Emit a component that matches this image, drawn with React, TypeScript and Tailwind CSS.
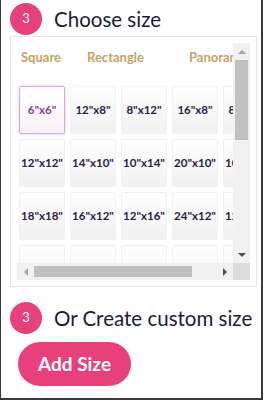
const rows = [
  ['6"x6"', '12"x8"', '8"x12"', '16"x8"', '8"x16"'],
  ['12"x12"', '14"x10"', '10"x14"', '20"x10"', '10"x20"'],
  ['18"x18"', '16"x12"', '12"x16"', '24"x12"', '12"x24"'],
  ['', '', '', '', ''],
];

function StepBadge() {
  return (
    <div className="w-[32px] h-[32px] rounded-full bg-[#e8407b] flex items-center justify-center text-white text-[13px] shrink-0">
      3
    </div>
  );
}

function Arrow({ dir, dark }: { dir: 'up' | 'down' | 'left' | 'right'; dark?: boolean }) {
  const c = dark ? 'border-[#505050]' : 'border-[#a3a3a3]';
  if (dir === 'up') return <div className={`w-0 h-0 border-x-[4px] border-x-transparent border-b-[4px] ${c}`} />;
  if (dir === 'down') return <div className={`w-0 h-0 border-x-[4px] border-x-transparent border-t-[4px] ${c}`} />;
  if (dir === 'left') return <div className={`w-0 h-0 border-y-[4px] border-y-transparent border-r-[4px] ${c}`} />;
  return <div className={`w-0 h-0 border-y-[4px] border-y-transparent border-l-[4px] ${c}`} />;
}

export default function App() {
  return (
    <div className="w-[264px] h-[401px] bg-white" style={{ fontFamily: 'Lato, "Open Sans", sans-serif' }}>
      <div className="w-[263px] h-[400px] border-l border-r-2 border-b-2 border-[#3a3a3a] pl-[9px] pt-[3px]">
        <div className="flex items-center gap-[12px]">
          <StepBadge />
          <div className="text-[20.5px] text-[#1d1846] leading-none">Choose size</div>
        </div>

        <div className="mt-[1px] w-[247px] h-[251px] border border-[#e6e6e6] p-[6px]">
          <div className="flex">
            <div className="w-[217px] h-[220px] overflow-hidden pl-[2px]">
              <div className="flex pt-[7px] pl-[2px] text-[13px] leading-[14px] font-bold text-[#c9a265] whitespace-nowrap">
                <div className="w-[66px] shrink-0">Square</div>
                <div className="w-[102px] shrink-0">Rectangle</div>
                <div className="shrink-0">Panorama</div>
              </div>
              <div className="mt-[22px] grid grid-cols-[repeat(5,46px)] gap-x-[5px] gap-y-[5px] w-[260px]">
                {rows.flat().map((s, i) => (
                  <div
                    key={i}
                    className={
                      i === 0
                        ? 'h-[48px] rounded-[2px] border border-[#d6a9e6] shadow-[0_0_3px_#e2bdf0] bg-gradient-to-b from-white to-[#f7f2f9] flex items-center justify-center text-[11.5px] font-bold text-[#8a3a9c]'
                        : 'h-[48px] rounded-[2px] border border-[#f2f2f2] bg-gradient-to-b from-white to-[#f1f1f1] flex items-center justify-center text-[11.5px] font-bold text-[#291c4c] whitespace-nowrap'
                    }
                  >
                    {s}
                  </div>
                ))}
              </div>
            </div>
            <div className="w-[17px] h-[220px] bg-[#f1f1f1] flex flex-col items-center">
              <div className="h-[17px] flex items-center justify-center"><Arrow dir="up" /></div>
              <div className="w-[13px] h-[80px] bg-[#c1c1c1]" />
              <div className="flex-1" />
              <div className="h-[17px] flex items-center justify-center"><Arrow dir="down" dark /></div>
            </div>
          </div>
          <div className="flex">
            <div className="w-[217px] h-[17px] bg-[#f1f1f1] flex items-center">
              <div className="w-[17px] flex justify-center"><Arrow dir="left" /></div>
              <div className="w-[158px] h-[11px] bg-[#c1c1c1]" />
              <div className="flex-1" />
              <div className="w-[17px] flex justify-center"><Arrow dir="right" dark /></div>
            </div>
            <div className="w-[17px] h-[17px] bg-[#dcdcdc]" />
          </div>
        </div>

        <div className="mt-[15px] flex items-center gap-[12px]">
          <StepBadge />
          <div className="text-[20.5px] text-[#1d1846] leading-none whitespace-nowrap">Or Create custom size</div>
        </div>

        <button className="mt-[8px] ml-[8px] w-[113px] h-[44px] rounded-full bg-[#e8407b] text-white text-[19px] font-bold">
          Add Size
        </button>
      </div>
    </div>
  );
}
